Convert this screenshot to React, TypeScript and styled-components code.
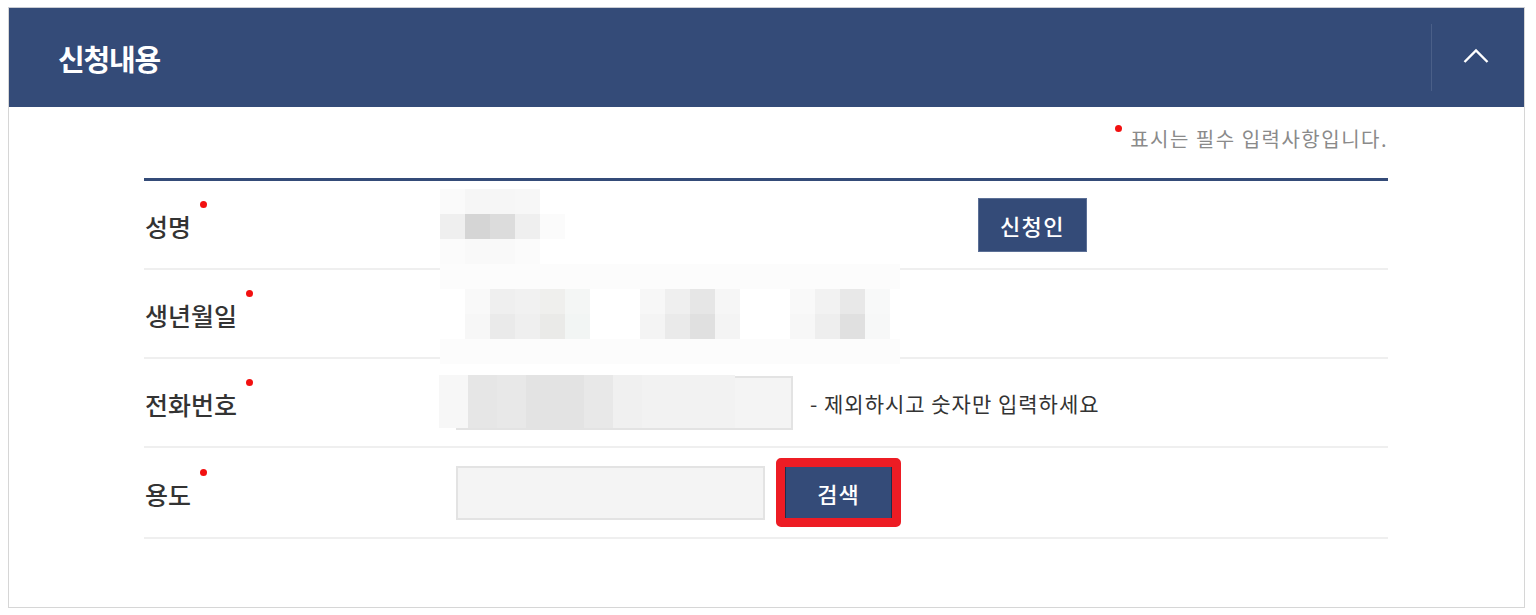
import React from "react";
import styled, { createGlobalStyle } from "styled-components";

const GlobalStyle = createGlobalStyle`
  body {
    margin: 0;
    background: #ffffff;
    font-family: "Noto Sans CJK KR", "Noto Sans", sans-serif;
  }
`;

const NAVY = "#344b78";

const nameBlur = [
  ["#fafafa", "#f6f6f6", "#f6f6f6", "#f7f7f7", ""],
  ["#efefef", "#d5d5d5", "#dcdcdc", "#efefef", "#fbfbfb"],
  ["#fbfbfb", "#f9f9f9", "#f9f9f9", "#fbfbfb", ""],
];

const strip = Array(19).fill("#fcfcfc");
const birthBlur = [
  strip,
  ["", "#f9f9f9", "#efefef", "#f1f1f1", "#efefed", "#f4f6f5", "", "", "#f7f7f7", "#efefef", "#e6e6e6", "#f6f6f6", "", "", "#f9f9f9", "#f2f2f2", "#e8e8e8", "#f8f9f9", ""],
  ["", "#f7f7f7", "#eaeaea", "#efefef", "#eaeae8", "#f2f5f4", "", "", "#f4f4f4", "#eaeaea", "#e0e0e0", "#f4f4f4", "", "", "#f7f7f7", "#eeeeee", "#e0e0e0", "#f7f8f8", ""],
  strip,
];

const phoneBlur = [["#f7f7f7", "#e6e6e6", "#e8e8e8", "#e3e3e3", "#e3e3e3", "#e8e8e8", "#f0f0f0", "#f2f2f2"]];

const Blur = ({ cells, cols, rowH, top, left, width }: { cells: string[][]; cols: string; rowH: number; top: number; left: number; width: number }) => (
  <Mosaic $cols={cols} $rowH={rowH} $top={top} $left={left} $width={width}>
    {cells.flat().map((c, i) => (
      <Cell key={i} $c={c} />
    ))}
  </Mosaic>
);

const Required = ({ children }: { children: React.ReactNode }) => (
  <Label>
    <LabelText>
      {children}
      <LabelDot />
    </LabelText>
  </Label>
);

const App = () => {
  return (
    <Page>
      <GlobalStyle />
      <Panel>
        <Header>
          <Title>신청내용</Title>
          <Toggle>
            <svg width="26" height="16" viewBox="0 0 26 16">
              <polyline points="1.5,14 13,2.5 24.5,14" fill="none" stroke="#ffffff" strokeWidth="2.4" />
            </svg>
          </Toggle>
        </Header>
        <Body>
          <Notice>
            <NoticeDot />
            표시는 필수 입력사항입니다.
          </Notice>
          <Table>
            <Row>
              <Required>성명</Required>
              <Value>
                <NameText />
                <NavyButton>신청인</NavyButton>
                <Blur cells={nameBlur} cols="repeat(5, 25px)" rowH={25} top={8} left={0} width={125} />
              </Value>
            </Row>
            <Row>
              <Required>생년월일</Required>
              <Value>
                <Blur cells={birthBlur} cols="repeat(19, 25px)" rowH={25} top={-6} left={0} width={460} />
              </Value>
            </Row>
            <Row>
              <Required>전화번호</Required>
              <Value>
                <Input $w={337} />
                <Help>- 제외하시고 숫자만 입력하세요</Help>
                <Blur cells={phoneBlur} cols="repeat(7, 29px) 93px" rowH={53} top={16} left={-1} width={296} />
              </Value>
            </Row>
            <Row>
              <Required>용도</Required>
              <Value>
                <Input $w={309} />
                <Highlight>
                  <SearchButton>검색</SearchButton>
                </Highlight>
              </Value>
            </Row>
          </Table>
        </Body>
      </Panel>
    </Page>
  );
};

export default App;

const Page = styled.div`
  padding: 7px 11px 8px 8px;
`;

const Panel = styled.div`
  border: 1px solid #d6d6d6;
  border-top-color: #c9ccd3;
`;

const Header = styled.div`
  height: 99px;
  background: ${NAVY};
  display: flex;
  align-items: center;
  justify-content: space-between;
  padding-left: 49px;
`;

const Title = styled.h2`
  margin: 0;
  color: #ffffff;
  font-size: 29px;
  font-weight: 700;
  letter-spacing: -1.2px;
`;

const Toggle = styled.div`
  width: 93px;
  height: 67px;
  border-left: 1px solid #4a5f88;
  display: flex;
  align-items: center;
  justify-content: center;
  padding-right: 4px;
  box-sizing: border-box;
  padding-bottom: 4px;
`;

const Body = styled.div`
  padding: 17px 136px 68px 135px;
`;

const Notice = styled.div`
  display: flex;
  justify-content: flex-end;
  align-items: flex-start;
  font-size: 20px;
  color: #8a8a8a;
  letter-spacing: 1.5px;
  height: 54px;
  line-height: 30px;
`;

const NoticeDot = styled.span`
  width: 7px;
  height: 7px;
  border-radius: 50%;
  background: #f21010;
  margin: 1px 8px 0 0;
`;

const Table = styled.div`
  border-top: 3px solid ${NAVY};
`;

const Row = styled.div`
  display: grid;
  grid-template-columns: 296px 1fr;
  height: 89px;
  border-bottom: 2px solid #efefef;
  box-sizing: border-box;

  &:last-child {
    height: 91px;
  }
`;

const Label = styled.div`
  display: flex;
  align-items: center;
  padding-left: 1px;
  padding-top: 4px;
  font-size: 25px;
  font-weight: 500;
  color: #333333;
`;

const LabelText = styled.span`
  position: relative;
  line-height: 25px;
`;

const LabelDot = styled.span`
  position: absolute;
  right: -16px;
  top: -13px;
  width: 7px;
  height: 7px;
  border-radius: 50%;
  background: #f21010;
`;

const Value = styled.div`
  position: relative;
  display: flex;
  align-items: center;
  padding-left: 16px;
`;

const NameText = styled.div`
  width: 522px;
`;

const NavyButton = styled.button`
  width: 109px;
  height: 54px;
  border: 1px solid #5b6f96;
  background: ${NAVY};
  color: #ffffff;
  font-family: inherit;
  font-size: 22px;
  font-weight: 500;
  letter-spacing: 1.5px;
  cursor: pointer;
`;

const Input = styled.div<{ $w: number }>`
  width: ${(p) => p.$w}px;
  height: 54px;
  box-sizing: border-box;
  background: #f4f4f4;
  border: 2px solid #e3e3e3;
`;

const Help = styled.span`
  margin-left: 17px;
  font-size: 21px;
  letter-spacing: 1px;
  color: #333333;
`;

const Highlight = styled.div`
  margin-left: 11px;
  border: 9px solid #ed1c24;
  border-radius: 5px;
  display: flex;
`;

const SearchButton = styled.button`
  width: 107px;
  height: 51px;
  border: none;
  border-left: 1px solid #1f2e4a;
  border-right: 1px solid #1f2e4a;
  background: ${NAVY};
  color: #ffffff;
  font-family: inherit;
  font-size: 22px;
  font-weight: 500;
  letter-spacing: 1px;
  cursor: pointer;
`;

const Mosaic = styled.div<{ $cols: string; $rowH: number; $top: number; $left: number; $width: number }>`
  position: absolute;
  top: ${(p) => p.$top}px;
  left: ${(p) => p.$left}px;
  width: ${(p) => p.$width}px;
  overflow: hidden;
  display: grid;
  grid-template-columns: ${(p) => p.$cols};
  grid-auto-rows: ${(p) => p.$rowH}px;
`;

const Cell = styled.div<{ $c: string }>`
  background: ${(p) => p.$c || "transparent"};
`;
